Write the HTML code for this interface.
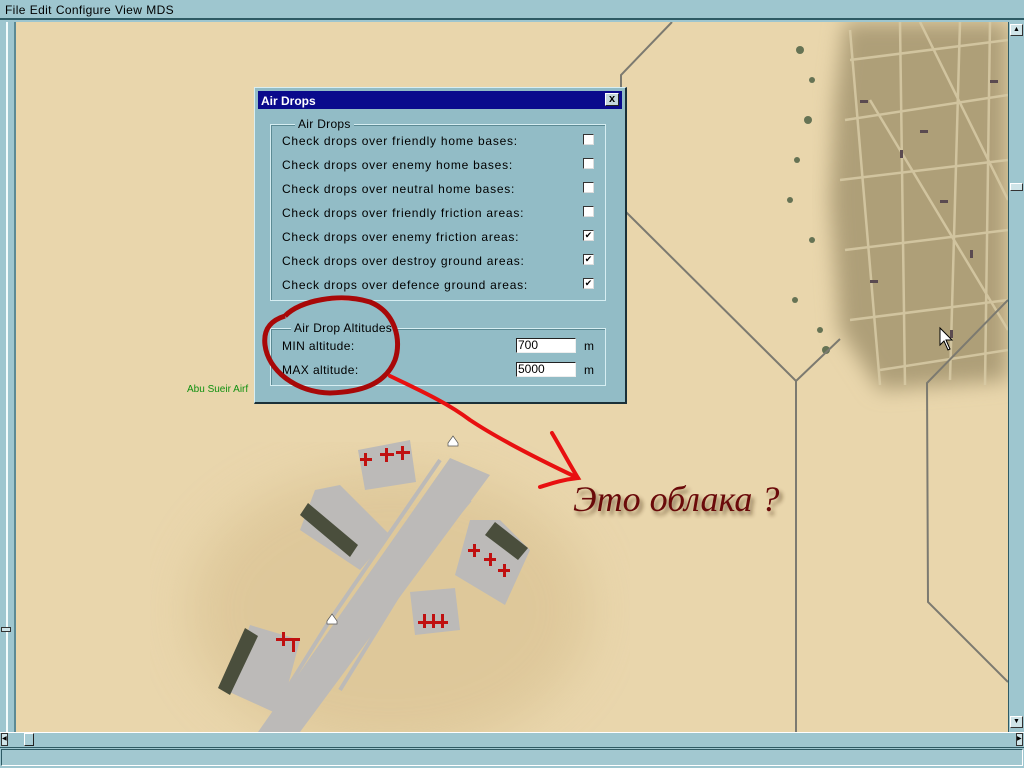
<!DOCTYPE html>
<html><head><meta charset="utf-8"><style>
*{margin:0;padding:0;box-sizing:border-box}
body{width:1024px;height:768px;overflow:hidden;background:#9ec6cf;font-family:"Liberation Sans",sans-serif;position:relative}
.abs{position:absolute}
#menu{left:0;top:0;width:1024px;height:20px;background:#9ec6cf;font-size:12px;padding:3px 0 0 5px;border-bottom:2px solid #2e5a64;letter-spacing:.35px}
#menu span{margin-right:4px}
.dlg{left:254px;top:87px;width:373px;height:317px;background:#92bcc6;border:1px solid #d8eef2;border-right:2px solid #1a3038;border-bottom:2px solid #1a3038}
.title{left:3px;top:3px;width:364px;height:18px;background:#0a0a8c;color:#fff;font-weight:bold;font-size:12px;padding:3px 0 0 3px}
.xbtn{right:3px;top:2px;width:14px;height:13px;background:#c4d8dc;border:1px solid #fff;border-right-color:#222;border-bottom-color:#222;color:#000;font-size:11px;line-height:10px;text-align:center;font-weight:bold}
.grp{border:1px solid #d6eef2;box-shadow:inset 1px 1px 0 #5c8a94}
.leg{background:#92bcc6;font-size:12px;padding:0 3px;letter-spacing:.3px}
.lbl{font-size:12px;color:#000;letter-spacing:.75px}
.cb{width:11px;height:11px;background:#fff;border:1px solid #333;border-right-color:#ddd;border-bottom-color:#ddd;font-size:9px;line-height:9px;text-align:center}
.inp{width:60px;height:15px;background:#fff;border:1px solid #222;border-right-color:#eee;border-bottom-color:#eee;font-size:12px;line-height:13px;padding-left:1px}
</style></head><body>
<div id="menu" class="abs"><span>File</span><span>Edit</span><span>Configure</span><span>View</span><span>MDS</span></div>
<div class="abs" style="left:6px;top:22px;width:2px;height:710px;background:#f4fcfc"></div>
<div class="abs" style="left:14px;top:22px;width:2px;height:710px;background:#5c8a94"></div>
<div class="abs" style="left:1px;top:627px;width:10px;height:5px;background:#cfe4e8;border:1px solid #333"></div>
<svg class="abs" style="left:16px;top:22px" width="992" height="710" viewBox="16 22 992 710">
<defs>
<filter id="bl"><feGaussianBlur stdDeviation="10"/></filter>
<filter id="bl2"><feGaussianBlur stdDeviation="25"/></filter>
<filter id="sh"><feGaussianBlur stdDeviation="2"/></filter>
</defs>
<rect x="16" y="22" width="992" height="710" fill="#e9d6ac"/>
<ellipse cx="390" cy="610" rx="200" ry="140" fill="#dcc596" filter="url(#bl2)" opacity=".8"/>
<polygon points="845,22 1008,22 1008,380 880,390 840,330 830,200 835,100" fill="#ae9f78" filter="url(#bl)"/>
<g stroke="#d8cba6" stroke-width="2.5" fill="none" opacity=".85">
<path d="M850 60 L1008 40 M845 120 L1008 95 M840 180 L1008 160 M845 250 L1008 230 M850 320 L1008 300 M880 370 L1008 350"/>
<path d="M900 22 L905 385 M960 22 L950 380 M850 30 L880 385 M990 22 L985 385 M920 22 L1008 200 M870 100 L1008 330"/>
</g>
<g fill="#2f4a30" opacity=".7">
<circle cx="800" cy="50" r="4"/><circle cx="812" cy="80" r="3"/><circle cx="808" cy="120" r="4"/><circle cx="797" cy="160" r="3"/><circle cx="790" cy="200" r="3"/><circle cx="812" cy="240" r="3"/><circle cx="795" cy="300" r="3"/><circle cx="826" cy="350" r="4"/><circle cx="820" cy="330" r="3"/>
</g>
<g fill="#5a4a50"><rect x="860" y="100" width="8" height="3"/><rect x="920" y="130" width="8" height="3"/><rect x="990" y="80" width="8" height="3"/><rect x="900" y="150" width="3" height="8"/><rect x="940" y="200" width="8" height="3"/><rect x="870" y="280" width="8" height="3"/><rect x="970" y="250" width="3" height="8"/><rect x="950" y="330" width="3" height="8"/></g>
<g stroke="#7c7a70" stroke-width="2" fill="none">
<path d="M672 22 L621 75 L621 90"/>
<path d="M626 212 L796 381 L840 339"/>
<path d="M796 381 L796 732"/>
<path d="M1008 300 L927 383 L928 602 L1008 682"/>
</g>
<text x="187" y="392" font-size="10" fill="#109010" font-family="Liberation Sans">Abu Sueir Airf</text>
<g fill="#bcbab8">
<polygon points="450,458 490,475 300,732 258,732"/>
<polygon points="358,450 410,440 416,482 365,490"/>
<polygon points="315,490 340,485 390,535 360,570 300,530"/>
<polygon points="470,520 500,520 530,550 505,605 455,575"/>
<polygon points="410,592 455,588 460,630 415,635"/>
<polygon points="250,625 300,640 280,715 225,690"/>
</g>
<g stroke="#bcbab8" stroke-width="4" fill="none"><path d="M440 460 L330 620 L280 700 M470 500 L420 560 L340 690"/></g>
<g fill="#4a4e3c"><polygon points="300,515 308,503 358,545 350,557"/><polygon points="485,535 495,522 528,548 518,560"/><polygon points="218,688 245,628 258,636 230,695"/></g>
<g fill="#c01010"><rect x="360" y="458" width="12" height="3"/><rect x="364" y="453" width="3" height="13"/><rect x="380" y="453" width="14" height="3"/><rect x="385" y="448" width="3" height="14"/><rect x="396" y="451" width="14" height="3"/><rect x="401" y="446" width="3" height="14"/><rect x="468" y="549" width="12" height="3"/><rect x="473" y="544" width="3" height="13"/><rect x="484" y="558" width="12" height="3"/><rect x="489" y="553" width="3" height="13"/><rect x="498" y="569" width="12" height="3"/><rect x="503" y="564" width="3" height="13"/><rect x="418" y="621" width="30" height="3"/><rect x="423" y="614" width="3" height="14"/><rect x="432" y="614" width="3" height="14"/><rect x="441" y="614" width="3" height="14"/><rect x="276" y="638" width="24" height="3"/><rect x="282" y="632" width="3" height="14"/><rect x="292" y="638" width="3" height="14"/></g>
<path d="M448 443 L453 436 L458 443 L458 446 L448 446Z" fill="#fff" stroke="#555" stroke-width=".7"/>
<path d="M327 621 L332 614 L337 621 L337 624 L327 624Z" fill="#fff" stroke="#555" stroke-width=".7"/>
<text x="576" y="515" font-family="Liberation Serif" font-style="italic" font-size="36" fill="#3a2010" opacity=".55" filter="url(#sh)">Это облака ?</text>
<text x="573" y="511" font-family="Liberation Serif" font-style="italic" font-size="36" fill="#6a0a0a">Это облака ?</text>
<path d="M940 328 L940 345 L944 341 L948 350 L950 349 L946 340 L952 340Z" fill="#fff" stroke="#000" stroke-width="1"/>
</svg>
<div class="abs" style="left:1008px;top:22px;width:16px;height:710px;background:#9ec6cf;border-left:1px solid #2e5a64"></div>
<div class="abs" style="left:1010px;top:24px;width:13px;height:12px;background:#cfe4e8;border:1px solid #fff;border-right-color:#333;border-bottom-color:#333;font-size:7px;text-align:center;line-height:10px">▲</div>
<div class="abs" style="left:1010px;top:183px;width:13px;height:8px;background:#cfe4e8;border:1px solid #fff;border-right-color:#333;border-bottom-color:#333"></div>
<div class="abs" style="left:1010px;top:716px;width:13px;height:12px;background:#cfe4e8;border:1px solid #fff;border-right-color:#333;border-bottom-color:#333;font-size:7px;text-align:center;line-height:10px">▼</div>
<div class="abs" style="left:0;top:732px;width:1024px;height:16px;background:#9ec6cf;border-top:1px solid #fff;border-bottom:1px solid #2e5a64"></div>
<div class="abs" style="left:1px;top:733px;width:7px;height:13px;background:#cfe4e8;border:1px solid #333;font-size:6px;line-height:11px">◀</div>
<div class="abs" style="left:24px;top:733px;width:10px;height:13px;background:#a8ccd4;border:1px solid #fff;border-right-color:#222;border-bottom-color:#222"></div>
<div class="abs" style="left:1016px;top:733px;width:7px;height:13px;background:#cfe4e8;border:1px solid #333;font-size:6px;line-height:11px">▶</div>
<div class="abs" style="left:1px;top:749px;width:1022px;height:17px;border:1px solid #2e5a64;border-right-color:#fff;border-bottom-color:#fff;background:#a2c8d0"></div>
<div class="abs dlg">
 <div class="abs title">Air Drops<div class="abs xbtn">x</div></div>
 <div class="abs grp" style="left:15px;top:36px;width:336px;height:177px"></div>
 <div class="abs leg" style="left:40px;top:29px">Air Drops</div>
 <div class="abs lbl" style="left:27px;top:46px">Check drops over friendly home bases:</div>
 <div class="abs lbl" style="left:27px;top:70px">Check drops over enemy home bases:</div>
 <div class="abs lbl" style="left:27px;top:94px">Check drops over neutral home bases:</div>
 <div class="abs lbl" style="left:27px;top:118px">Check drops over friendly friction areas:</div>
 <div class="abs lbl" style="left:27px;top:142px">Check drops over enemy friction areas:</div>
 <div class="abs lbl" style="left:27px;top:166px">Check drops over destroy ground areas:</div>
 <div class="abs lbl" style="left:27px;top:190px">Check drops over defence ground areas:</div>
 <div class="abs cb" style="left:328px;top:46px"></div>
 <div class="abs cb" style="left:328px;top:70px"></div>
 <div class="abs cb" style="left:328px;top:94px"></div>
 <div class="abs cb" style="left:328px;top:118px"></div>
 <div class="abs cb" style="left:328px;top:142px">✔</div>
 <div class="abs cb" style="left:328px;top:166px">✔</div>
 <div class="abs cb" style="left:328px;top:190px">✔</div>
 <div class="abs grp" style="left:15px;top:240px;width:336px;height:58px"></div>
 <div class="abs leg" style="left:36px;top:233px">Air Drop Altitudes</div>
 <div class="abs lbl" style="left:27px;top:251px;letter-spacing:.4px">MIN altitude:</div>
 <div class="abs lbl" style="left:27px;top:275px;letter-spacing:.4px">MAX altitude:</div>
 <div class="abs inp" style="left:261px;top:250px">700</div>
 <div class="abs inp" style="left:261px;top:274px">5000</div>
 <div class="abs lbl" style="left:329px;top:251px">m</div>
 <div class="abs lbl" style="left:329px;top:275px">m</div>
</div>
<svg class="abs" style="left:0;top:0" width="1024" height="768">
<path d="M285 316 C300 300 340 293 370 302 C395 312 402 340 395 360 C385 385 360 392 330 393 C295 392 268 370 265 345 C263 328 272 320 285 316" stroke="#a80808" stroke-width="5" fill="none"/>
<path d="M390 376 C430 395 450 405 470 420 C500 440 540 460 578 478" stroke="#e81010" stroke-width="4" fill="none" stroke-linecap="round"/>
<path d="M552 433 C562 450 570 465 578 478 C560 480 550 484 540 487" stroke="#e81010" stroke-width="4" fill="none" stroke-linecap="round"/>
</svg>
</body></html>
